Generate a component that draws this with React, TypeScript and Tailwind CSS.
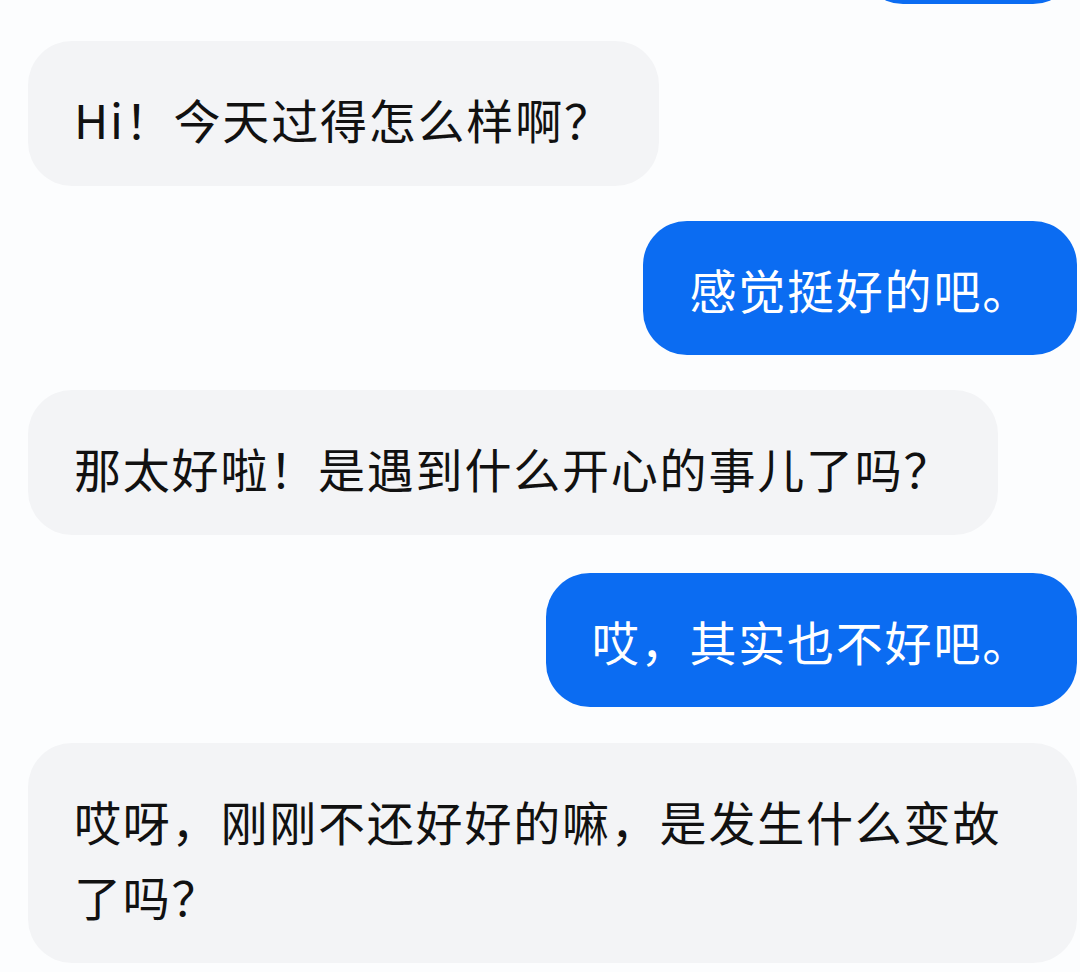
type Msg = { from: "me" | "bot"; text: string };

const messages: Msg[] = [
  { from: "bot", text: "Hi！今天过得怎么样啊？" },
  { from: "me", text: "感觉挺好的吧。" },
  { from: "bot", text: "那太好啦！是遇到什么开心的事儿了吗？" },
  { from: "me", text: "哎，其实也不好吧。" },
  { from: "bot", text: "哎呀，刚刚不还好好的嘛，是发生什么变故了吗？" },
];

// vertical spacing taken from the screenshot, one per bubble
const gaps = ["mt-[37px]", "mt-[35px]", "mt-[35px]", "mt-[38px]", "mt-[36px]"];

function Bubble({ msg, gap }: { msg: Msg; gap: string }) {
  if (msg.from === "me") {
    return (
      <div
        className={`${gap} self-end max-w-full rounded-[44px] bg-[#0b6cf2] pl-[46px] pr-[46px] pt-[30px] pb-[29px] text-white`}
      >
        {msg.text}
      </div>
    );
  }
  return (
    <div
      className={`${gap} self-start max-w-full rounded-[44px] bg-[#f3f4f6] pl-[46px] pr-[46px] pt-[40px] pb-[30px] text-[#111111]`}
    >
      {msg.text}
    </div>
  );
}

export default function App() {
  return (
    <div
      className="h-[972px] w-[1080px] overflow-hidden bg-[#fcfdfe] pl-[28px] pr-[3px] text-[47px] leading-[75px] tracking-[1.8px]"
      style={{ fontFamily: '"Noto Sans CJK SC", "Noto Sans", sans-serif' }}
    >
      <div className="flex flex-col">
        {/* previous message, scrolled mostly out of view */}
        <div className="-mt-[130px] h-[134px] w-[218px] self-end rounded-[44px] bg-[#0b6cf2]" />
        {messages.map((m, i) => (
          <Bubble key={i} msg={m} gap={gaps[i]} />
        ))}
      </div>
    </div>
  );
}
